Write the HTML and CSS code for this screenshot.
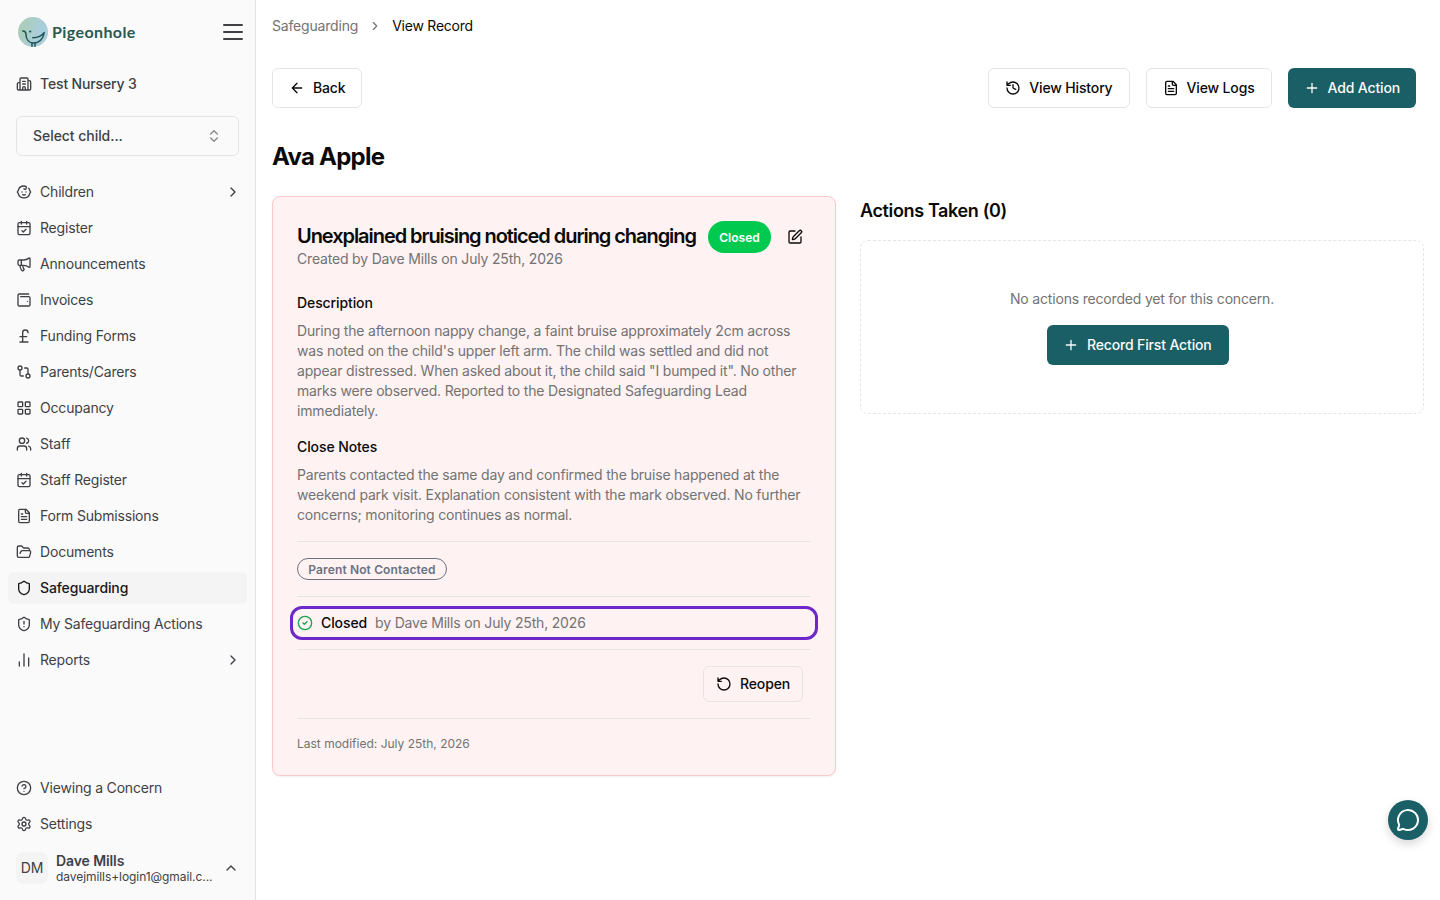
FILE: index.html
```html
<!DOCTYPE html>
<html lang="en">
<head>
<meta charset="utf-8">
<title>View Record - Pigeonhole</title>
<link rel="stylesheet" href="styles.css">
</head>
<body>
<div class="app">
  <aside class="sidebar">
    <div class="brand">
      <div class="logo">
        <svg class="logo-mark" viewBox="0 0 30 32">
          <defs><linearGradient id="sky" x1="0" y1="0" x2="1" y2=".3"><stop offset=".2" stop-color="#abcdb9"/><stop offset=".8" stop-color="#a9cedb"/></linearGradient></defs>
          <circle cx="15" cy="15" r="15" fill="url(#sky)"/>
          <g fill="none" stroke="#1f5154" stroke-width="1.5" stroke-linecap="round" stroke-linejoin="round">
            <path d="M4.800 13.900c2.200 0 3.100 1.200 3.200 3.500.1 5 3 8.600 7.700 8.600 5.300 0 9.600-4 10.400-10.400-2.200 3.200-5.200 5-11.300 5.100"/>
            <path d="M14 26.300v3M17 26.300v3"/>
          </g>
          <circle cx="12.200" cy="14.500" r="1.100" fill="#1f5154"/>
        </svg>
        <span class="logo-text">Pigeonhole</span>
      </div>
      <svg class="burger" viewBox="0 0 20 18"><path d="M1 2h18M1 9h18M1 16h18"/></svg>
    </div>
    <div class="nav-item nursery"><svg class="icon" viewBox="0 0 24 24"><path d="M10 12h4M10 8h4M14 21v-3a2 2 0 0 0-4 0v3M6 10H4a2 2 0 0 0-2 2v7a2 2 0 0 0 2 2h16a2 2 0 0 0 2-2V9a2 2 0 0 0-2-2h-2M6 21V5a2 2 0 0 1 2-2h8a2 2 0 0 1 2 2v16"/></svg><span>Test Nursery 3</span></div>
    <div class="select"><span>Select child...</span><svg class="icon" viewBox="0 0 24 24"><path d="m7 15 5 5 5-5M7 9l5-5 5 5"/></svg></div>
    <nav class="nav">
      <div class="nav-item"><svg class="icon" viewBox="0 0 24 24"><path d="M9 12h.01M15 12h.01M10 16c.5.3 1.200.5 2 .5s1.500-.2 2-.5M19 6.300a9 9 0 0 1 1.800 3.900 2 2 0 0 1 0 3.600 9 9 0 0 1-17.600 0 2 2 0 0 1 0-3.600A9 9 0 0 1 12 3c2 0 3.500 1.100 3.500 2.500s-.9 2.500-2 2.500c-.8 0-1.500-.4-1.500-1"/></svg><span>Children</span><svg class="icon caret" viewBox="0 0 24 24"><path d="m9 18 6-6-6-6"/></svg></div>
      <div class="nav-item"><svg class="icon" viewBox="0 0 24 24"><path d="M8 2v4M16 2v4M3 10h18m-12 6 2 2 4-4"/><rect width="18" height="18" x="3" y="4" rx="2"/></svg><span>Register</span></div>
      <div class="nav-item"><svg class="icon" viewBox="0 0 24 24"><path d="M11 6a13 13 0 0 0 8.400-2.800A1 1 0 0 1 21 4v12a1 1 0 0 1-1.600.8A13 13 0 0 0 11 14H5a2 2 0 0 1-2-2V8a2 2 0 0 1 2-2zM6 14a12 12 0 0 0 2.400 7.200 2 2 0 0 0 3.200-2.400A8 8 0 0 1 10 14M8 6v8"/></svg><span>Announcements</span></div>
      <div class="nav-item"><svg class="icon" viewBox="0 0 24 24"><path d="M17 14h.01M7 7h12a2 2 0 0 1 2 2v10a2 2 0 0 1-2 2H5a2 2 0 0 1-2-2V5a2 2 0 0 1 2-2h14"/></svg><span>Invoices</span></div>
      <div class="nav-item"><svg class="icon" viewBox="0 0 24 24"><path d="M18 7c0-5.333-8-5.333-8 0M10 7v14M6 21h12M6 13h10"/></svg><span>Funding Forms</span></div>
      <div class="nav-item"><svg class="icon" viewBox="0 0 24 24"><circle cx="18" cy="18" r="3"/><circle cx="6" cy="6" r="3"/><path d="M13 6h3a2 2 0 0 1 2 2v7M11 18H8a2 2 0 0 1-2-2V9"/></svg><span>Parents/Carers</span></div>
      <div class="nav-item"><svg class="icon" viewBox="0 0 24 24"><rect width="7" height="7" x="3" y="3" rx="1"/><rect width="7" height="7" x="14" y="3" rx="1"/><rect width="7" height="7" x="14" y="14" rx="1"/><rect width="7" height="7" x="3" y="14" rx="1"/></svg><span>Occupancy</span></div>
      <div class="nav-item"><svg class="icon" viewBox="0 0 24 24"><path d="M16 21v-2a4 4 0 0 0-4-4H6a4 4 0 0 0-4 4v2M16 3.128a4 4 0 0 1 0 7.744M22 21v-2a4 4 0 0 0-3-3.870"/><circle cx="9" cy="7" r="4"/></svg><span>Staff</span></div>
      <div class="nav-item"><svg class="icon" viewBox="0 0 24 24"><path d="M8 2v4M16 2v4M3 10h18m-12 6 2 2 4-4"/><rect width="18" height="18" x="3" y="4" rx="2"/></svg><span>Staff Register</span></div>
      <div class="nav-item"><svg class="icon" viewBox="0 0 24 24"><path d="M15 2H6a2 2 0 0 0-2 2v16a2 2 0 0 0 2 2h12a2 2 0 0 0 2-2V7ZM14 2v4a2 2 0 0 0 2 2h4M10 9H8M16 13H8M16 17H8"/></svg><span>Form Submissions</span></div>
      <div class="nav-item"><svg class="icon" viewBox="0 0 24 24"><path d="m6 14 1.500-2.900A2 2 0 0 1 9.240 10H20a2 2 0 0 1 1.940 2.500l-1.540 6a2 2 0 0 1-1.950 1.500H4a2 2 0 0 1-2-2V5a2 2 0 0 1 2-2h3.900a2 2 0 0 1 1.690.9l.81 1.200a2 2 0 0 0 1.670.9H18a2 2 0 0 1 2 2v2"/></svg><span>Documents</span></div>
      <div class="nav-item active"><svg class="icon" viewBox="0 0 24 24"><path d="M20 13c0 5-3.500 7.500-7.660 8.950a1 1 0 0 1-.67-.01C7.500 20.500 4 18 4 13V6a1 1 0 0 1 1-1c2 0 4.500-1.200 6.240-2.720a1.170 1.170 0 0 1 1.520 0C14.510 3.810 17 5 19 5a1 1 0 0 1 1 1z"/></svg><span>Safeguarding</span></div>
      <div class="nav-item"><svg class="icon" viewBox="0 0 24 24"><path d="M20 13c0 5-3.500 7.500-7.660 8.950a1 1 0 0 1-.67-.01C7.500 20.500 4 18 4 13V6a1 1 0 0 1 1-1c2 0 4.500-1.200 6.240-2.720a1.170 1.170 0 0 1 1.520 0C14.510 3.810 17 5 19 5a1 1 0 0 1 1 1zM12 8v4M12 16h.01"/></svg><span>My Safeguarding Actions</span></div>
      <div class="nav-item"><svg class="icon" viewBox="0 0 24 24"><path d="M5 21v-6M12 21V3M19 21V9"/></svg><span>Reports</span><svg class="icon caret" viewBox="0 0 24 24"><path d="m9 18 6-6-6-6"/></svg></div>
    </nav>
    <div class="nav nav-bottom">
      <div class="nav-item"><svg class="icon" viewBox="0 0 24 24"><circle cx="12" cy="12" r="10"/><path d="M9.090 9a3 3 0 0 1 5.830 1c0 2-3 3-3 3M12 17h.01"/></svg><span>Viewing a Concern</span></div>
      <div class="nav-item"><svg class="icon" viewBox="0 0 24 24"><path d="M9.671 4.136a2.340 2.340 0 0 1 4.659 0 2.340 2.340 0 0 0 3.319 1.915 2.340 2.340 0 0 1 2.330 4.033 2.340 2.340 0 0 0 0 3.831 2.340 2.340 0 0 1-2.330 4.033 2.340 2.340 0 0 0-3.319 1.915 2.340 2.340 0 0 1-4.659 0 2.340 2.340 0 0 0-3.320-1.915 2.340 2.340 0 0 1-2.330-4.033 2.340 2.340 0 0 0 0-3.831A2.340 2.340 0 0 1 6.350 6.051a2.340 2.340 0 0 0 3.319-1.915"/><circle cx="12" cy="12" r="3"/></svg><span>Settings</span></div>
    </div>
    <div class="user">
      <div class="avatar">DM</div>
      <div class="user-info"><div class="user-name">Dave Mills</div><div class="user-mail">davejmills+login1@gmail.c...</div></div>
      <svg class="icon" viewBox="0 0 24 24"><path d="m18 15-6-6-6 6"/></svg>
    </div>
  </aside>

  <main class="main">
    <div class="crumbs"><span>Safeguarding</span><svg class="crumb-sep" viewBox="0 0 24 24"><path d="m9 18 6-6-6-6"/></svg><span class="current">View Record</span></div>
    <div class="toolbar">
      <button class="btn"><svg class="icon" viewBox="0 0 24 24"><path d="m12 19-7-7 7-7M19 12H5"/></svg>Back</button>
      <div class="toolbar-right">
        <button class="btn"><svg class="icon" viewBox="0 0 24 24"><path d="M3 12a9 9 0 1 0 9-9 9.750 9.750 0 0 0-6.740 2.740L3 8M3 3v5h5M12 7v5l4 2"/></svg>View History</button>
        <button class="btn"><svg class="icon" viewBox="0 0 24 24"><path d="M15 2H6a2 2 0 0 0-2 2v16a2 2 0 0 0 2 2h12a2 2 0 0 0 2-2V7ZM14 2v4a2 2 0 0 0 2 2h4M10 9H8M16 13H8M16 17H8"/></svg>View Logs</button>
        <button class="btn primary"><svg class="icon" viewBox="0 0 24 24"><path d="M5 12h14M12 5v14"/></svg>Add Action</button>
      </div>
    </div>
    <h1 class="page-title">Ava Apple</h1>
    <div class="columns">
      <section class="card">
        <div class="card-head">
          <div class="card-heading"><h2 class="card-title">Unexplained bruising noticed during changing</h2><div class="card-meta">Created by Dave Mills on July 25th, 2026</div></div>
          <span class="status">Closed</span>
          <svg class="icon edit" viewBox="0 0 24 24"><path d="M12 3H5a2 2 0 0 0-2 2v14a2 2 0 0 0 2 2h14a2 2 0 0 0 2-2v-7M18.375 2.625a1 1 0 0 1 3 3l-9.013 9.014a2 2 0 0 1-.853.505l-2.873.84a.5.5 0 0 1-.62-.62l.84-2.873a2 2 0 0 1 .506-.852z"/></svg>
        </div>
        <h3 class="label">Description</h3>
        <p class="text">During the afternoon nappy change, a faint bruise approximately 2cm across<br>was noted on the child's upper left arm. The child was settled and did not<br>appear distressed. When asked about it, the child said "I bumped it". No other<br>marks were observed. Reported to the Designated Safeguarding Lead<br>immediately.</p>
        <h3 class="label">Close Notes</h3>
        <p class="text">Parents contacted the same day and confirmed the bruise happened at the<br>weekend park visit. Explanation consistent with the mark observed. No further<br>concerns; monitoring continues as normal.</p>
        <div class="row"><span class="tag">Parent Not Contacted</span></div>
        <div class="row closed-row">
          <div class="closed"><svg class="icon check" viewBox="0 0 24 24"><circle cx="12" cy="12" r="10"/><path d="m9 12 2 2 4-4"/></svg><strong>Closed</strong><span>by Dave Mills on July 25th, 2026</span></div>
        </div>
        <div class="row reopen-row"><button class="btn small"><svg class="icon" viewBox="0 0 24 24"><path d="M3 12a9 9 0 1 0 9-9 9.750 9.750 0 0 0-6.740 2.740L3 8M3 3v5h5"/></svg>Reopen</button></div>
        <div class="row modified">Last modified: July 25th, 2026</div>
      </section>
      <section class="actions">
        <h2 class="actions-title">Actions Taken (0)</h2>
        <div class="empty">
          <p class="empty-text">No actions recorded yet for this concern.</p>
          <button class="btn primary"><svg class="icon" viewBox="0 0 24 24"><path d="M5 12h14M12 5v14"/></svg>Record First Action</button>
        </div>
      </section>
    </div>
  </main>
</div>
<div class="chat"><svg viewBox="0 0 24 24"><path d="M2.992 16.342a2 2 0 0 1 .094 1.167l-1.065 3.290a1 1 0 0 0 1.236 1.168l3.413-.998a2 2 0 0 1 1.099.092 10 10 0 1 0-4.777-4.719"/></svg></div>
</body>
</html>
```
FILE: styles.css
```css
* { box-sizing: border-box; }
body { margin: 0; background: #fff; color: #0a0a0a; font: 14px/20px Inter, sans-serif; letter-spacing: -.18px; }
h1, h2, h3, p { margin: 0; }
.app { display: flex; height: 900px; overflow: hidden; }
.icon { width: 16px; height: 16px; flex: none; fill: none; stroke: currentColor; stroke-width: 2; stroke-linecap: round; stroke-linejoin: round; }

.sidebar { width: 256px; flex: none; display: flex; flex-direction: column; background: #fafafa; border-right: 1px solid #e5e5e5; color: #3f3f46; padding: 16px 8px 8px; }
.brand { display: flex; align-items: center; justify-content: space-between; height: 32px; padding: 0 4px 0 10px; }
.logo { display: flex; align-items: center; gap: 4px; }
.logo-mark { width: 30px; height: 32px; margin-top: 2px; }
.logo-text { font: 700 16px/20px Lato, sans-serif; letter-spacing: .4px; color: #28594f; }
.burger { width: 20px; height: 18px; fill: none; stroke: #3f3f46; stroke-width: 2; stroke-linecap: round; }
.nav { display: flex; flex-direction: column; gap: 4px; }
.nav-item { display: flex; align-items: center; gap: 8px; height: 32px; padding: 0 6px 0 8px; border-radius: 6px; white-space: nowrap; }
.nursery { margin-top: 20px; font-weight: 500; letter-spacing: -.14px; }
.caret { margin-left: auto; }
.active { background: #f4f4f5; color: #18181b; font-weight: 500; letter-spacing: -.12px; }
.select { display: flex; align-items: center; justify-content: space-between; height: 40px; margin: 16px 8px 20px; padding: 0 16px; border: 1px solid #e5e5e5; border-radius: 6px; font-weight: 500; letter-spacing: -.05px; }
.select .icon { opacity: .6; }
.nav-bottom { margin-top: auto; }
.user { display: flex; align-items: center; gap: 8px; height: 48px; margin-top: 4px; padding: 0 8px; }
.avatar { width: 32px; height: 32px; flex: none; border-radius: 8px; background: #f4f4f5; display: flex; align-items: center; justify-content: center; }
.user-info { width: 159px; padding-top: 1px; white-space: nowrap; }
.user-name { font-weight: 600; line-height: 17px; letter-spacing: -.1px; }
.user-mail { font-size: 12px; line-height: 16px; letter-spacing: -.07px; }

.main { flex: 1; min-width: 0; padding: 16px; }
.crumbs { display: flex; align-items: center; gap: 10px; height: 20px; color: #737373; }
.crumb-sep { width: 14px; height: 14px; fill: none; stroke: currentColor; stroke-width: 2; stroke-linecap: round; stroke-linejoin: round; }
.current { color: #0a0a0a; letter-spacing: -.24px; }
.toolbar { display: flex; justify-content: space-between; margin-top: 32px; padding-right: 8px; }
.toolbar-right { display: flex; gap: 16px; }
.btn { display: inline-flex; align-items: center; gap: 8px; height: 40px; padding: 0 16px; border: 1px solid #e5e5e5; border-radius: 6px; background: #fff; color: #0a0a0a; font: 500 14px/20px Inter, sans-serif; letter-spacing: -.15px; white-space: nowrap; }
.primary { background: #1a5f65; border: 0; color: #fafafa; }
.small { height: 36px; padding: 0 12px; background: transparent; }
.page-title { margin-top: 33px; font-size: 24px; line-height: 32px; font-weight: 700; letter-spacing: -.75px; }
.columns { display: grid; grid-template-columns: minmax(0, 1fr) minmax(0, 1fr); gap: 24px; margin-top: 23px; align-items: start; }

.card { height: 580px; padding: 24px; border: 1px solid #ffc9c9; border-radius: 8px; background: #fef2f2; box-shadow: 0 1px 2px rgba(0, 0, 0, .06); }
.card-head { display: flex; align-items: flex-start; height: 72px; }
.card-heading { width: 411px; flex: none; white-space: nowrap; }
.card-title { padding-top: 1px; font-size: 20px; line-height: 28px; font-weight: 600; letter-spacing: -1.055px; }
.card-meta { margin-top: -1px; color: #737373; }
.status { display: flex; align-items: center; justify-content: center; width: 63px; height: 32px; padding-top: 1px; border-radius: 16px; background: #00c950; color: #fff; font-size: 12px; font-weight: 600; letter-spacing: 0; }
.edit { margin: 8px 0 0 16px; }
.label { font-size: 14px; line-height: 20px; font-weight: 500; letter-spacing: -.1px; margin-bottom: 8px; }
.text { color: #737373; margin-bottom: 16px; white-space: nowrap; }
.row { height: 55px; padding-top: 16px; border-top: 1px solid #e5e5e5; }
.tag { display: flex; align-items: center; justify-content: center; width: 150px; height: 22px; padding-top: 1px; border: 1px solid #6b7280; border-radius: 11px; color: #6b7280; font-size: 12px; line-height: 16px; font-weight: 600; letter-spacing: .13px; }
.closed-row { height: 53px; padding-top: 9px; }
.closed { display: flex; align-items: center; gap: 8px; height: 34px; margin: 0 -7px; padding: 0 4px; border: 3px solid #6d28c9; border-radius: 12px; color: #737373; }
.closed strong { font-weight: 500; color: #0a0a0a; letter-spacing: -.1px; }
.check { color: #16a34a; }
.reopen-row { display: flex; justify-content: flex-end; height: 69px; padding-right: 8px; }
.modified { font-size: 12px; line-height: 16px; color: #737373; padding-top: 17px; letter-spacing: 0; }

.actions-title { margin-top: 1px; font-size: 18px; line-height: 28px; font-weight: 600; letter-spacing: -.36px; }
.empty { display: flex; flex-direction: column; align-items: center; height: 174px; margin-top: 15px; padding-top: 48px; border: 1px dashed #e5e5e5; border-radius: 8px; }
.empty-text { color: #737373; margin-bottom: 16px; }
.empty .btn { width: 182px; margin-right: 8px; }

.chat { position: fixed; left: 1388px; top: 800px; width: 40px; height: 40px; border-radius: 50%; background: #1a5f65; display: flex; align-items: center; justify-content: center; box-shadow: 0 4px 10px rgba(0, 0, 0, .16); }
.chat svg { width: 24px; height: 24px; fill: none; stroke: #fff; stroke-width: 2; stroke-linecap: round; stroke-linejoin: round; }
```
